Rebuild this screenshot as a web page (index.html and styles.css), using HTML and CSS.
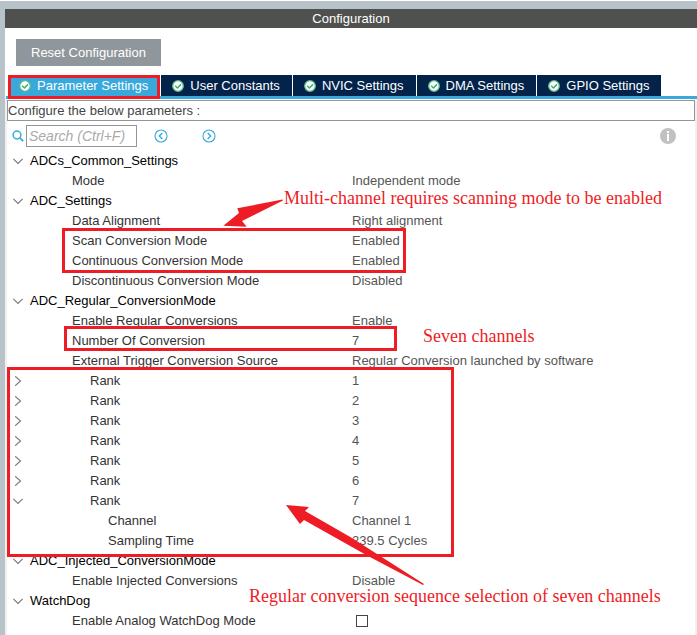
FILE: index.html
```html
<!DOCTYPE html>
<html lang="en">
<head>
<meta charset="utf-8">
<title>Configuration</title>
<link rel="stylesheet" href="styles.css">
</head>
<body>
<svg class="defs" aria-hidden="true">
  <symbol id="ok" viewBox="0 0 12 12"><circle cx="6" cy="6" r="5.3" fill="#fff" stroke="#5cba86" stroke-width="1.3"/><path d="M3.2 5.8 5.4 8 9 4.4" fill="none" stroke="#3fae72" stroke-width="1.5"/></symbol>
  <symbol id="down" viewBox="0 0 10 10"><path d="M0.3 2.8 5 7.5 9.7 2.8" fill="none" stroke="#777" stroke-width="1.1"/></symbol>
  <symbol id="right" viewBox="0 0 10 10"><path d="M2.2 0.3 7.5 5 2.2 9.7" fill="none" stroke="#777" stroke-width="1.1"/></symbol>
</svg>
<main class="panel">
  <h1 class="title">Configuration</h1>
  <div class="actions"><button class="reset" type="button">Reset Configuration</button></div>
  <nav class="tabs">
    <button class="tab active" type="button"><svg class="ok"><use href="#ok"/></svg>Parameter Settings</button>
    <button class="tab" type="button"><svg class="ok"><use href="#ok"/></svg>User Constants</button>
    <button class="tab" type="button"><svg class="ok"><use href="#ok"/></svg>NVIC Settings</button>
    <button class="tab" type="button"><svg class="ok"><use href="#ok"/></svg>DMA Settings</button>
    <button class="tab" type="button"><svg class="ok"><use href="#ok"/></svg>GPIO Settings</button>
  </nav>
  <section class="content">
    <p class="hint">Configure the below parameters :</p>
    <div class="toolbar">
      <label class="find" for="search"><svg class="lens" viewBox="0 0 12 12" aria-label="Search"><circle cx="5" cy="5" r="3.9" fill="none" stroke="#39a9dc" stroke-width="1.5"/><path d="M7.8 7.8 11.2 11.2" stroke="#39a9dc" stroke-width="1.8"/></svg></label>
      <input class="search" id="search" type="text" placeholder="Search (Ctrl+F)">
      <button class="step" type="button" aria-label="Previous"><svg viewBox="0 0 14 14"><circle cx="7" cy="7" r="6" fill="none" stroke="#39a9dc" stroke-width="1.1"/><path d="M8.3 4 5.3 7 8.3 10" fill="none" stroke="#39a9dc" stroke-width="1.4"/></svg></button>
      <button class="step" type="button" aria-label="Next"><svg viewBox="0 0 14 14"><circle cx="7" cy="7" r="6" fill="none" stroke="#39a9dc" stroke-width="1.1"/><path d="M5.7 4 8.7 7 5.7 10" fill="none" stroke="#39a9dc" stroke-width="1.4"/></svg></button>
      <button class="info" type="button" aria-label="Information"><svg viewBox="0 0 16 16"><circle cx="8" cy="8" r="8" fill="#c1c1c1"/><rect x="7" y="3" width="2" height="2" fill="#fff"/><rect x="7" y="6" width="2" height="7" fill="#fff"/></svg></button>
    </div>
    <table class="params">
      <colgroup><col class="col-toggle"><col class="col-name"><col></colgroup>
      <tbody>
      <tr class="group"><td><svg><use href="#down"/></svg></td><th scope="row">ADCs_Common_Settings</th><td></td></tr>
      <tr><td></td><th scope="row">Mode</th><td>Independent mode</td></tr>
      <tr class="group"><td><svg><use href="#down"/></svg></td><th scope="row">ADC_Settings</th><td></td></tr>
      <tr><td></td><th scope="row">Data Alignment</th><td>Right alignment</td></tr>
      <tr><td></td><th scope="row">Scan Conversion Mode</th><td>Enabled</td></tr>
      <tr><td></td><th scope="row">Continuous Conversion Mode</th><td>Enabled</td></tr>
      <tr><td></td><th scope="row">Discontinuous Conversion Mode</th><td>Disabled</td></tr>
      <tr class="group"><td><svg><use href="#down"/></svg></td><th scope="row">ADC_Regular_ConversionMode</th><td></td></tr>
      <tr><td></td><th scope="row">Enable Regular Conversions</th><td>Enable</td></tr>
      <tr><td></td><th scope="row">Number Of Conversion</th><td>7</td></tr>
      <tr><td></td><th scope="row">External Trigger Conversion Source</th><td>Regular Conversion launched by software</td></tr>
      <tr class="rank"><td><svg><use href="#right"/></svg></td><th scope="row">Rank</th><td>1</td></tr>
      <tr class="rank"><td><svg><use href="#right"/></svg></td><th scope="row">Rank</th><td>2</td></tr>
      <tr class="rank"><td><svg><use href="#right"/></svg></td><th scope="row">Rank</th><td>3</td></tr>
      <tr class="rank"><td><svg><use href="#right"/></svg></td><th scope="row">Rank</th><td>4</td></tr>
      <tr class="rank"><td><svg><use href="#right"/></svg></td><th scope="row">Rank</th><td>5</td></tr>
      <tr class="rank"><td><svg><use href="#right"/></svg></td><th scope="row">Rank</th><td>6</td></tr>
      <tr class="rank"><td><svg><use href="#down"/></svg></td><th scope="row">Rank</th><td>7</td></tr>
      <tr class="detail"><td></td><th scope="row">Channel</th><td>Channel 1</td></tr>
      <tr class="detail"><td></td><th scope="row">Sampling Time</th><td>239.5 Cycles</td></tr>
      <tr class="group"><td><svg><use href="#down"/></svg></td><th scope="row">ADC_Injected_ConversionMode</th><td></td></tr>
      <tr><td></td><th scope="row">Enable Injected Conversions</th><td>Disable</td></tr>
      <tr class="group"><td><svg><use href="#down"/></svg></td><th scope="row">WatchDog</th><td></td></tr>
      <tr><td></td><th scope="row"><label for="watchdog">Enable Analog WatchDog Mode</label></th><td class="tick"><input id="watchdog" type="checkbox"></td></tr>
      </tbody>
    </table>
  </section>
</main>
<div class="mark mark-tab"></div>
<div class="mark mark-modes"></div>
<div class="mark mark-count"></div>
<div class="mark mark-ranks"></div>
<svg class="arrow arrow-scan" viewBox="0 0 60 30"><path d="M59.500 0.500 14.300 9.300 16 14 0.300 26.700 23.700 27.700 19 22 60 1.500Z" fill="#ee1c25"/></svg>
<svg class="arrow arrow-rank" viewBox="0 0 139 81"><path d="M0 0 23 2 19 6 66 33 91 49 138 79 137 80 82 51 18 15 14 19Z" fill="#ee1c25"/></svg>
<p class="note note-scan">Multi-channel requires scanning mode to be enabled</p>
<p class="note note-count">Seven channels</p>
<p class="note note-rank">Regular conversion sequence selection of seven channels</p>
</body>
</html>
```
FILE: styles.css
```css
* { box-sizing: border-box; }
body {
  display: flex;
  flex-direction: column;
  min-height: 100vh;
  margin: 0;
  padding: 1px 0 0;
  position: relative;
  background: #fff;
  font: 13px/20px "Liberation Sans", Arial, sans-serif;
  color: #333;
}
button, input { font: inherit; }
.defs { position: absolute; width: 0; height: 0; }
.panel { display: flex; flex-direction: column; flex: 1; border: solid #b7c3c9; border-width: 8px 0 0 5px; }
.title { margin: 0; height: 19px; background: #4f514f; color: #fff; font-size: 13px; line-height: 19px; font-weight: 400; text-align: center; }
.actions { padding: 11px 11px 9px; }
.reset { display: block; height: 27px; padding: 0 15px; border: 0; background: #90979c; color: #fff; }
.tabs { display: flex; gap: 1px; margin-left: 1px; padding-left: 2px; border-bottom: 3px solid #39a9dc; }
.tab { display: flex; align-items: center; gap: 6px; height: 21px; padding: 0 12px 0 11px; border: 0; background: #03234b; color: #fff; white-space: nowrap; }
.tab.active { background: #39a9dc; }
.ok { width: 12px; height: 12px; }
.content { flex: 1; padding-top: 1px; border: solid #f0f0f0; border-width: 0 2px; }
.hint { margin: 0; height: 21px; border: 1px solid #90979c; line-height: 20px; color: #444; }
.toolbar { display: flex; align-items: center; height: 29px; margin-bottom: 1px; padding: 0 19px 0 5px; }
.find { display: flex; margin-right: 2px; }
.lens { width: 12px; height: 12px; }
.search { width: 111px; height: 22px; padding: 0 2px; border: 1px solid #90979c; border-radius: 0; outline: 0; font-size: 14px; }
.search::placeholder { color: #aaa; font-style: italic; opacity: 1; }
.step, .info { display: block; padding: 0; border: 0; background: none; }
.step { width: 14px; height: 14px; margin-left: 17px; }
.step + .step { margin-left: 34px; }
.step svg, .info svg { display: block; width: 100%; height: 100%; }
.info { width: 16px; height: 16px; margin-left: auto; }
.params { width: 100%; border-collapse: collapse; table-layout: fixed; }
.col-toggle { width: 23px; }
.col-name { width: 322px; }
.params tr { height: 20px; }
.params td, .params th { padding: 0; font-weight: 400; text-align: left; white-space: nowrap; line-height: 20px; }
.params td { color: #555; }
.params th { padding-left: 42px; }
.params .group th { padding-left: 0; color: #000; }
.params .rank th { padding-left: 60px; }
.params .detail th { padding-left: 78px; }
.params svg { display: block; width: 10px; height: 10px; margin-left: 6px; }
.params .tick { padding-left: 4px; }
.tick input { display: block; appearance: none; width: 12px; height: 12px; margin: 0; border: 1px solid #444; background: #fff; }
.mark { position: absolute; border: 3px solid #ee1c25; pointer-events: none; }
.mark-tab { left: 8px; top: 75px; width: 152px; height: 24px; }
.mark-modes { left: 62px; top: 228px; width: 344px; height: 45px; }
.mark-count { left: 64px; top: 326px; width: 333px; height: 25px; }
.mark-ranks { left: 7px; top: 367px; width: 447px; height: 190px; }
.arrow { position: absolute; pointer-events: none; }
.arrow-scan { left: 223px; top: 199px; width: 60px; height: 30px; }
.arrow-rank { left: 286px; top: 505px; width: 139px; height: 81px; }
.note { position: absolute; margin: 0; font: 18px/20px "Liberation Serif", "Times New Roman", serif; color: #ee1c25; white-space: nowrap; pointer-events: none; }
.note-scan { left: 284px; top: 188px; }
.note-count { left: 423px; top: 326px; }
.note-rank { left: 249px; top: 586px; }
```
